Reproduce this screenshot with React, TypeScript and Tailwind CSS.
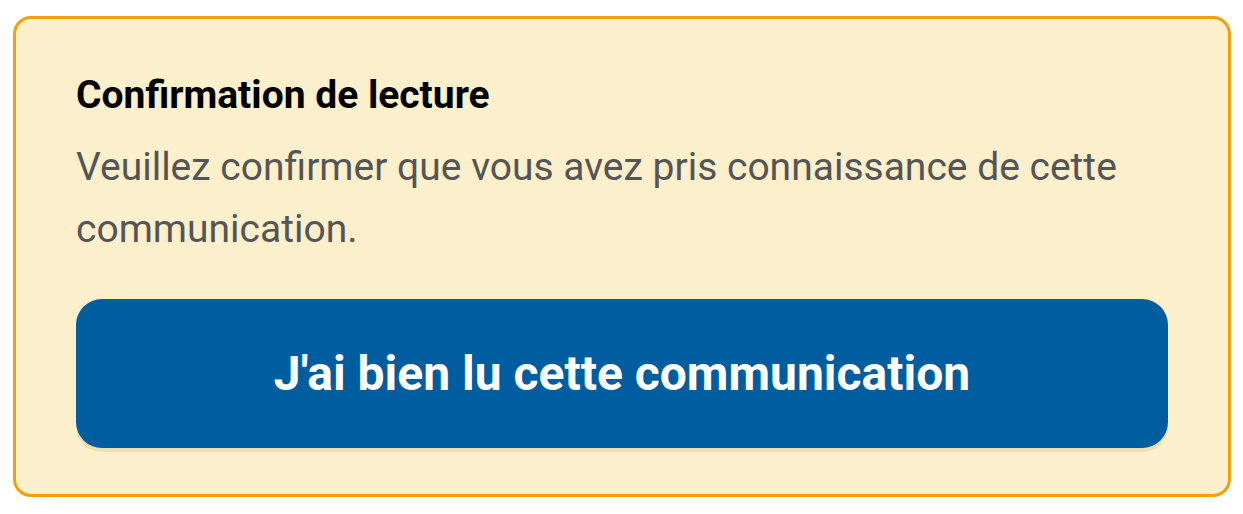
export default function App() {
  return (
    <div className="w-[1243px] h-[514px] bg-white pt-[16px] pl-[13px] pr-[12px]" style={{ fontFamily: "Roboto, 'Noto Sans', sans-serif" }}>
      <div className="border-[3px] border-[#f0a00a] rounded-[18px] bg-[#fcefcc] pl-[60px] pr-[60px] pt-[53px] pb-[46px]">
        <h2 className="text-[39px] leading-[46px] font-bold text-black">Confirmation de lecture</h2>
        <p className="mt-[18px] text-[39px] leading-[62px] text-[#555555]">
          Veuillez confirmer que vous avez pris connaissance de cette communication.
        </p>
        <button className="mt-[39px] w-full h-[149px] rounded-[26px] bg-[#005da0] text-white text-[48px] font-bold shadow-[0_4px_0_0_rgba(200,170,100,0.25)]">
          J'ai bien lu cette communication
        </button>
      </div>
    </div>
  );
}
